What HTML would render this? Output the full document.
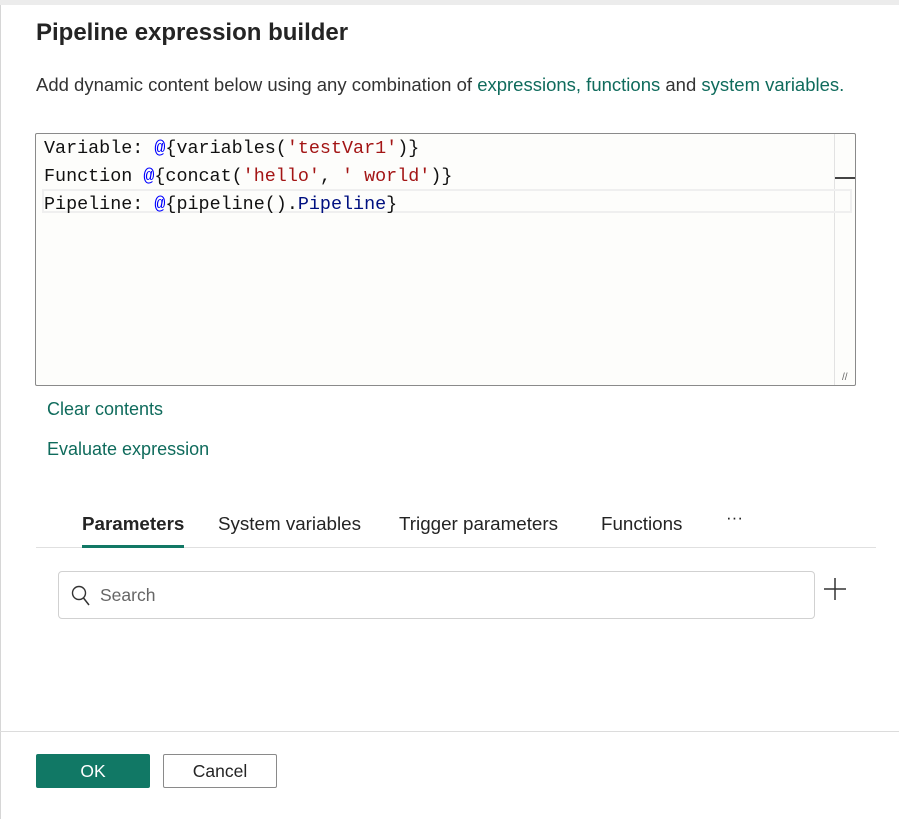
<!DOCTYPE html>
<html><head><style>
body{margin:0;width:899px;height:819px;background:#fff;font-family:"Liberation Sans",sans-serif;position:relative;overflow:hidden;color:#242424}
.a{position:absolute;white-space:nowrap}
.top{left:0;top:0;width:899px;height:5px;background:#ececec}
.lb{left:0;top:5px;width:1px;height:814px;background:#d6d6d6}
.link{color:#0f6b5c}
.code{font-family:"Liberation Mono",monospace;font-size:18.4px;color:#111}
.k{color:#0000ff}.s{color:#a31515}.p{color:#001080}
</style></head><body>
<div class="a top"></div><div class="a lb"></div>
<div class="a" style="left:36px;top:19px;font-size:24px;font-weight:bold;color:#242424">Pipeline expression builder</div>
<div class="a" style="left:36px;top:74px;font-size:18.5px;color:#333">Add dynamic content below using any combination of <span class="link">expressions, functions</span> and <span class="link">system variables.</span></div>
<div class="a" style="left:35px;top:133px;width:819px;height:251px;border:1px solid #8a8a8a;border-radius:2px;background:#fdfdfb"></div>
<div class="a" style="left:834px;top:134px;width:1px;height:251px;background:#e2e2e2"></div>
<div class="a" style="left:835px;top:177px;width:20px;height:2px;background:#444"></div>
<div class="a" style="left:42px;top:189px;width:810px;height:24px;border:2px solid #efefef;box-sizing:border-box"></div>
<div class="a" style="left:842px;top:372px;font-size:10px;color:#666">//</div>
<div class="a code" style="left:44px;top:138px">Variable: <span class="k">@</span>{variables(<span class="s">'testVar1'</span>)}</div>
<div class="a code" style="left:44px;top:166px">Function <span class="k">@</span>{concat(<span class="s">'hello'</span>, <span class="s">' world'</span>)}</div>
<div class="a code" style="left:44px;top:194px">Pipeline: <span class="k">@</span>{pipeline().<span class="p">Pipeline</span>}</div>
<div class="a link" style="left:47px;top:399px;font-size:18px">Clear contents</div>
<div class="a link" style="left:47px;top:439px;font-size:18px">Evaluate expression</div>
<div class="a" style="left:82px;top:513px;font-size:18.8px;font-weight:bold;color:#242424">Parameters</div>
<div class="a" style="left:218px;top:513px;font-size:18.8px">System variables</div>
<div class="a" style="left:399px;top:513px;font-size:18.8px">Trigger parameters</div>
<div class="a" style="left:601px;top:513px;font-size:18.8px">Functions</div>
<div class="a" style="left:726px;top:508px;font-size:17px">···</div>
<div class="a" style="left:36px;top:547px;width:840px;height:1px;background:#e0e0e0"></div>
<div class="a" style="left:82px;top:545px;width:102px;height:3px;background:#117865"></div>
<div class="a" style="left:58px;top:571px;width:755px;height:46px;border:1px solid #d1d1d1;border-radius:4px"></div>
<svg class="a" style="left:70px;top:584px" width="22" height="24" viewBox="0 0 22 24"><circle cx="9" cy="9" r="6.5" fill="none" stroke="#333" stroke-width="1.4"/><path d="M13.5 14 L19 21" stroke="#333" stroke-width="1.5"/></svg>
<div class="a" style="left:100px;top:585px;font-size:17.5px;color:#666">Search</div>
<svg class="a" style="left:823px;top:577px" width="24" height="24"><path d="M12 1v22M1 12h22" stroke="#333" stroke-width="1.5"/></svg>
<div class="a" style="left:0;top:731px;width:899px;height:1px;background:#dcdcdc"></div>
<div class="a" style="left:36px;top:754px;width:114px;height:34px;background:#117865;border-radius:2px;color:#fff;font-size:17.5px;text-align:center;line-height:34px">OK</div>
<div class="a" style="left:163px;top:754px;width:112px;height:32px;border:1px solid #8a8a8a;border-radius:2px;font-size:17.5px;text-align:center;line-height:32px">Cancel</div>
</body></html>
